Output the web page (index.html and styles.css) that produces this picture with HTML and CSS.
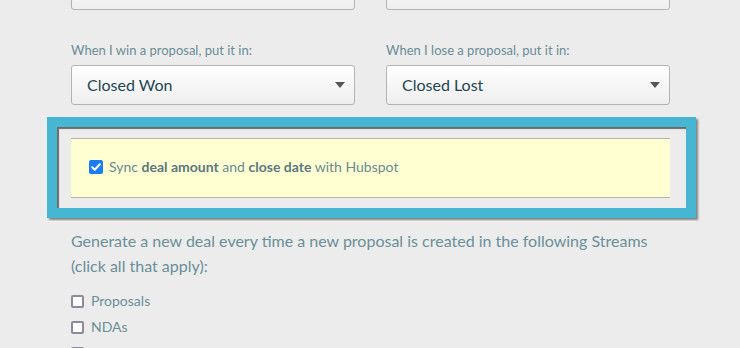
FILE: index.html
```html
<!DOCTYPE html>
<html>
<head>
<meta charset="utf-8">
<link rel="stylesheet" href="styles.css">
</head>
<body>
<div class="page">
  <div class="row top-row">
    <div class="select stub"></div>
    <div class="select stub"></div>
  </div>
  <div class="row field-row">
    <div class="field">
      <div class="label">When I win a proposal, put it in:</div>
      <div class="select"><span>Closed Won</span><span class="arrow"></span></div>
    </div>
    <div class="field">
      <div class="label">When I lose a proposal, put it in:</div>
      <div class="select"><span>Closed Lost</span><span class="arrow"></span></div>
    </div>
  </div>
  <div class="highlight">
    <div class="sync">
      <span class="cb checked"><svg width="14" height="14" viewBox="0 0 14 14"><path d="M3.2 7.3 L5.8 9.8 L10.9 4.3" fill="none" stroke="#fff" stroke-width="2" stroke-linecap="round" stroke-linejoin="round"/></svg></span>
      <span class="sync-text">Sync <b>deal amount</b> and <b>close date</b> with Hubspot</span>
    </div>
  </div>
  <div class="divider"></div>
  <p class="intro">Generate a new deal every time a new proposal is created in the following Streams (click all that apply):</p>
  <ul class="streams">
    <li><span class="cb"></span>Proposals</li>
    <li><span class="cb"></span>NDAs</li>
    <li><span class="cb"></span>SOWs</li>
  </ul>
</div>
</body>
</html>
```
FILE: styles.css
```css
* { box-sizing: border-box; }
html, body { margin: 0; padding: 0; }
body {
  background: #ececec;
  font-family: Lato, "Open Sans", sans-serif;
  width: 740px;
  height: 348px;
  overflow: hidden;
}
.page {
  padding: 0 70px 0 71px;
}
.row {
  display: grid;
  grid-template-columns: 284px 284px;
  column-gap: 31px;
}
.select {
  height: 40px;
  border: 1px solid #b3b3b3;
  border-radius: 3px;
  background: linear-gradient(#ffffff, #eeeeee);
  display: flex;
  align-items: center;
  justify-content: space-between;
  padding: 0 9px 2px 15px;
  color: #1f4652;
  font-size: 16px;
}
.stub {
  margin-top: -30px;
}
.field-row {
  margin-top: 32px;
}
.label {
  font-size: 13px;
  line-height: 16px;
  color: #6a8d97;
  margin-bottom: 7px;
}
.arrow {
  width: 0;
  height: 0;
  border-left: 5px solid transparent;
  border-right: 5px solid transparent;
  border-top: 6px solid #555;
  margin-top: 2px;
}
.highlight {
  margin: 12px -26px 0 -24px;
  border: 10px solid #46b6d2;
  background: #ececec;
  padding: 11px 16px 10px 14px;
  box-shadow: 2px 2px 2px rgba(0,0,0,0.45), inset 2px 2px 1px rgba(0,0,0,0.55);
}
.sync {
  height: 60px;
  background: #ffffd2;
  border-top: 1px solid #b2b2b2;
  border-bottom: 1px solid #b2b2b2;
  display: flex;
  align-items: center;
  padding-left: 18px;
  padding-bottom: 3px;
  gap: 6px;
}
.sync-text {
  font-size: 14px;
  color: #6b8a93;
}
.sync-text b {
  color: #5b7781;
  font-weight: 700;
}
.cb {
  width: 13px;
  height: 13px;
  border: 2px solid #8e8a9b;
  border-radius: 2px;
  background: #fff;
  flex: none;
  display: inline-block;
}
.cb.checked {
  width: 14px;
  height: 14px;
  border: none;
  background: #1b7ef0;
  display: flex;
}
.divider {
  height: 1px;
  background: #f5f5f5;
  margin: 3px -26px 0 -24px;
}
.intro {
  margin: 6px 0 0;
  font-size: 16px;
  line-height: 25px;
  color: #6a8f99;
}
.streams {
  list-style: none;
  margin: 10px 0 0;
  padding: 0;
}
.streams li {
  display: flex;
  align-items: center;
  gap: 7px;
  font-size: 14px;
  line-height: 26px;
  color: #6a8f99;
}
```
